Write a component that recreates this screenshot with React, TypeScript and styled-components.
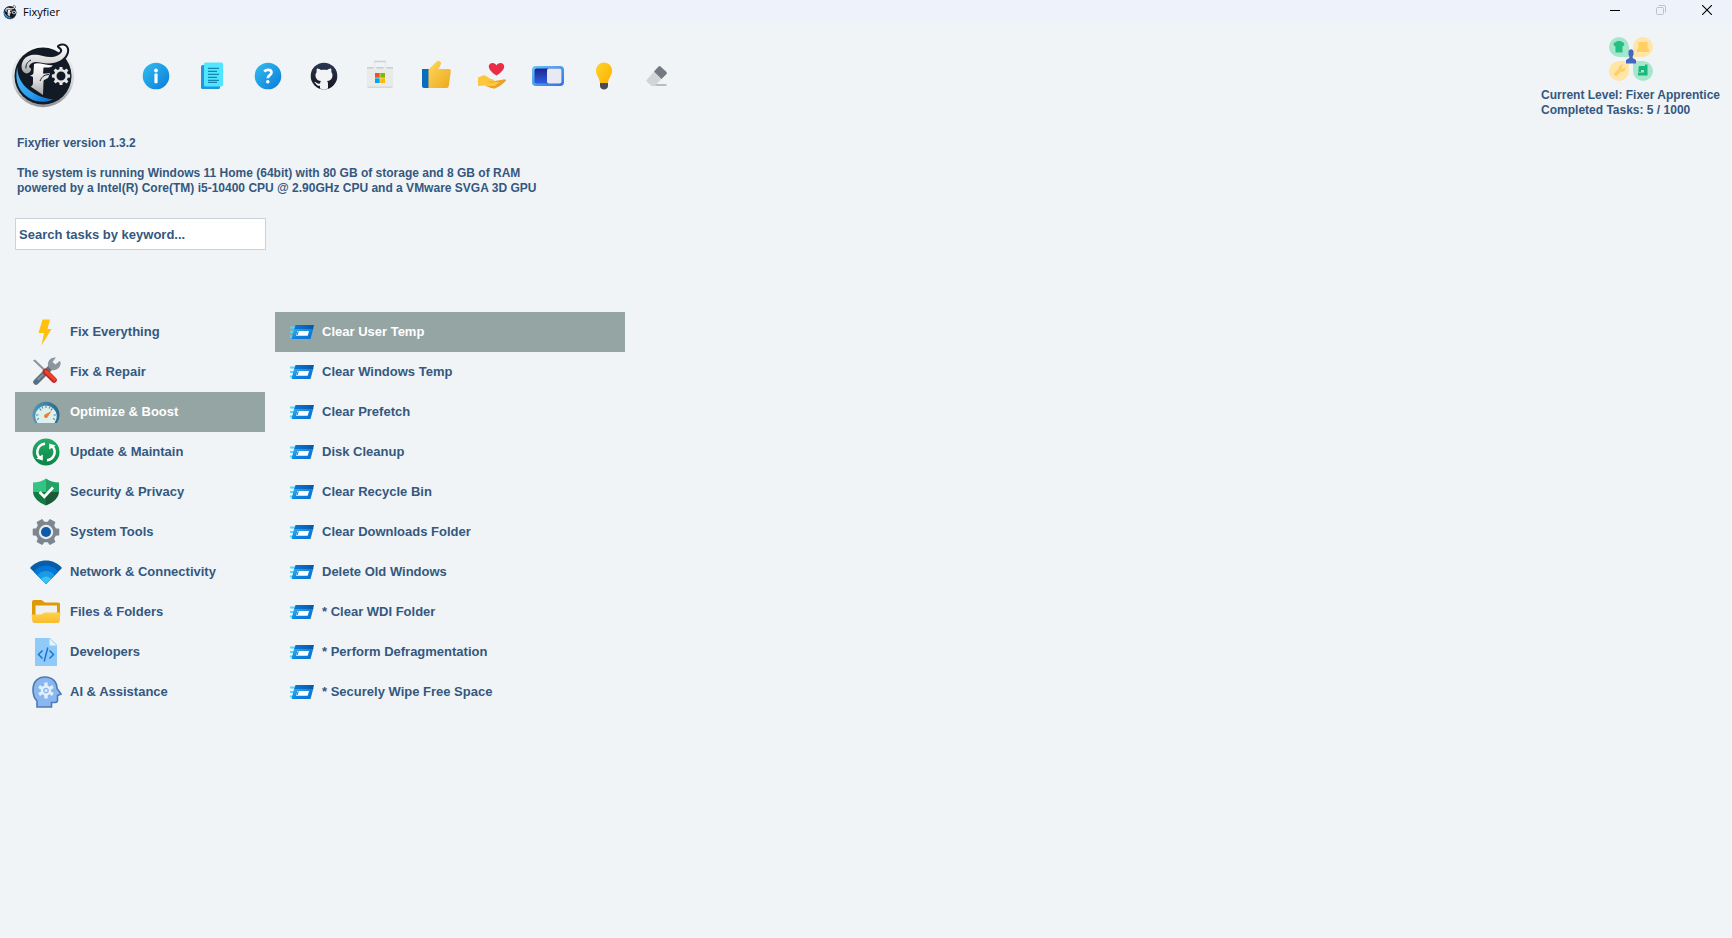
import React, { useState } from "react";
import styled, { createGlobalStyle, css } from "styled-components";

const GlobalStyle = createGlobalStyle`
  *, *::before, *::after { box-sizing: border-box; }
  body {
    margin: 0;
    background: #f0f4f7;
    color: #34587f;
    font-family: "Liberation Sans", Arial, sans-serif;
    font-size: 12px;
    font-weight: 700;
  }
  button, input { font: inherit; color: inherit; }
`;

const Page = styled.div`
  min-height: 100vh;
  background: #f0f4f7;
`;

const TitleBar = styled.header`
  display: flex;
  align-items: center;
  height: 23px;
  padding: 0 2px;
  background: #eef2fb;
`;

const WindowTitle = styled.h1`
  flex: 1;
  margin: 0 0 0 5px;
  color: #000;
  font-family: "Open Sans", "Noto Sans", sans-serif;
  font-size: 11px;
  font-weight: 400;
  line-height: 22px;
`;

const WindowButton = styled.button<{ $dim?: boolean }>`
  display: flex;
  justify-content: center;
  align-items: center;
  width: 46px;
  height: 20px;
  padding: 0;
  border: 0;
  background: none;
  align-self: flex-start;
  color: ${(p) => (p.$dim ? "#bfc2c8" : "#000")};
`;

const Header = styled.div`
  display: flex;
  align-items: flex-start;
  padding: 15px 12px 0 7px;
`;

const Toolbar = styled.nav`
  display: flex;
  gap: 24px;
  flex: 1;
  margin: 22px 0 0 61px;
`;

const ToolButton = styled.button`
  display: flex;
  width: 32px;
  height: 32px;
  padding: 0;
  border: 0;
  background: none;
  cursor: pointer;
`;

const Level = styled.section`
  display: flex;
  flex-direction: column;
  align-items: center;
  margin-top: -1px;
`;

const Lines = styled.p`
  margin: 0;
  font-size: 12px;
  line-height: 15px;
`;

const LevelLines = styled(Lines)`
  margin-top: 7px;
`;

const Info = styled.section`
  display: flex;
  flex-direction: column;
  gap: 15px;
  padding: 18px 17px 0;
`;

const SearchInput = styled.input`
  display: block;
  width: 251px;
  height: 32px;
  margin: 22px 0 62px 15px;
  padding: 0 3px;
  border: 1px solid #ccd2da;
  border-radius: 0;
  background: #fff;
  font-size: 13px;
  outline: none;
  &::placeholder { color: #34587f; opacity: 1; }
`;

const Columns = styled.main`
  display: flex;
  gap: 10px;
  padding: 0 15px 24px;
`;

const List = styled.ul<{ $width: number }>`
  width: ${(p) => p.$width}px;
  margin: 0;
  padding: 0;
  list-style: none;
`;

const rowSelected = css`
  background: #95a5a4;
  color: #fff;
`;

const RowButton = styled.button<{ $selected: boolean }>`
  display: flex;
  align-items: center;
  gap: 8px;
  width: 100%;
  height: 40px;
  padding: 0 15px;
  border: 0;
  background: none;
  font-size: 13px;
  line-height: 20px;
  text-align: left;
  white-space: pre;
  cursor: pointer;
  ${(p) => p.$selected && rowSelected}
`;

function gear(cx: number, cy: number, teeth: number, outer: number, inner: number) {
  const step = (Math.PI * 2) / teeth;
  const pts: string[] = [];
  for (let i = 0; i < teeth; i++) {
    const a = i * step - Math.PI / 2;
    const corners: [number, number][] = [
      [-0.3, inner],
      [-0.2, outer],
      [0.2, outer],
      [0.3, inner],
    ];
    corners.forEach(([t, r]) =>
      pts.push(`${(cx + r * Math.cos(a + t * step)).toFixed(2)} ${(cy + r * Math.sin(a + t * step)).toFixed(2)}`)
    );
  }
  return `M${pts.join("L")}Z`;
}

const Logo = ({ size, id }: { size: number; id: string }) => (
  <svg width={size} height={size} viewBox="0 0 72 72" aria-hidden="true">
    <defs>
      <linearGradient id={`${id}r`} x1="0" y1="0" x2="0" y2="1">
        <stop offset="0" stopColor="#fafafa" />
        <stop offset=".6" stopColor="#d4d6d8" />
        <stop offset="1" stopColor="#8f9397" />
      </linearGradient>
      <linearGradient id={`${id}b`} x1="0" y1="0" x2="1" y2="1">
        <stop offset="0" stopColor="#4fb9f8" />
        <stop offset=".6" stopColor="#2a9df0" />
        <stop offset="1" stopColor="#0b66c4" />
      </linearGradient>
      <linearGradient id={`${id}f`} x1="0" y1="0" x2="0" y2="1">
        <stop offset="0" stopColor="#fff" />
        <stop offset=".55" stopColor="#dcdcdc" />
        <stop offset="1" stopColor="#a3a5a8" />
      </linearGradient>
    </defs>
    <circle cx="36" cy="38" r="31.2" fill={`url(#${id}r)`} />
    <circle cx="36" cy="38" r="28.5" fill="#121a26" />
    <path d="M10.500 29C9.500 43 22 58 46 61.500C34 67 20 62 13.500 52C9 45 8.500 36 10.500 29Z" fill={`url(#${id}b)`} />
    <path
      d="M52 8.500C57 6 61 9 60 14C58.500 21 50 25.500 41 25.500C34 25.500 29 22.500 25 25C22 27 21 29 24 30.500C24.500 33.500 21 36.500 18 35C14 33 13.500 27 16.500 22C21 15.500 29 16 36 18C44 20.500 53 18.500 55 13.500C55.800 11 54 10 52 8.500Z"
      fill={`url(#${id}f)`}
      stroke="#121a26"
      strokeWidth="4"
      strokeLinejoin="round"
      paintOrder="stroke"
    />
    <path d="M19 30.500C18.500 27 20.500 23.500 24 22" fill="none" stroke="#121a26" strokeWidth="1" />
    <path
      d="M27 26C31 24 38 27 46 27.500C44 30 40 29.500 36.500 29.500L36 35.500C38 36 42 35 43 35.500L41.500 39C41 41 37.500 41 36.500 43L36 57L23.500 48.500C26 48 26 46 26 43V39L23 37.500C26 37 26.500 36 26.500 34Z"
      fill={`url(#${id}f)`}
    />
    <path d="M42 36.500C36 37 35 39 33 43" fill="none" stroke="#121a26" strokeWidth="1" />
    <path
      fillRule="evenodd"
      d={`${gear(54, 38, 8, 9.2, 7)}M49.500 38a4.500 4.500 0 1 0 9 0a4.500 4.500 0 1 0-9 0Z`}
      fill="#e6e6e6"
      stroke="#121a26"
      strokeWidth="2"
      paintOrder="stroke"
    />
  </svg>
);

const BlueDisc = ({ children, id }: { children: React.ReactNode; id: string }) => (
  <svg width="32" height="32" viewBox="0 0 32 32" aria-hidden="true">
    <defs>
      <linearGradient id={id} x1="0" y1="0" x2="1" y2="1">
        <stop offset="0" stopColor="#33bef0" />
        <stop offset="1" stopColor="#0a7bdb" />
      </linearGradient>
    </defs>
    <circle cx="16" cy="16" r="13.300" fill={`url(#${id})`} />
    {children}
  </svg>
);

const InfoIcon = () => (
  <BlueDisc id="discInfo">
    <circle cx="16" cy="10.500" r="1.900" fill="#fff" />
    <rect x="14.400" y="13.600" width="3.200" height="9.600" rx=".6" fill="#fff" />
  </BlueDisc>
);

const HelpIcon = () => (
  <BlueDisc id="discHelp">
    <path d="M12.300 11.600C13.500 10 15 9.800 16.200 9.800C18.300 9.800 19.500 10.900 19.500 12.500C19.500 15.200 15.800 15.200 15.800 18.200" fill="none" stroke="#fff" strokeWidth="2.700" />
    <circle cx="15.800" cy="21.800" r="1.800" fill="#fff" />
  </BlueDisc>
);

const DocsIcon = () => (
  <svg width="32" height="32" viewBox="0 0 32 32" aria-hidden="true">
    <rect x="5" y="5" width="19" height="24" rx="1.500" fill="#2196dc" />
    <rect x="8" y="2.500" width="19" height="24" rx="1.500" fill="#50e6ff" />
    <path d="M12 8.500h11M12 11.500h9M12 14.500h11M12 17.500h9M12 20.500h11M12 22.500h9" transform="translate(0 -.2)" stroke="#1587b5" strokeWidth="1.200" />
  </svg>
);

const GithubIcon = () => (
  <svg width="32" height="32" viewBox="0 0 32 32" aria-hidden="true">
    <defs>
      <linearGradient id="ghDisc" x1="0" y1="0" x2="0" y2="1">
        <stop offset="0" stopColor="#2b3854" />
        <stop offset="1" stopColor="#15151c" />
      </linearGradient>
    </defs>
    <circle cx="16" cy="16" r="13.300" fill="url(#ghDisc)" />
    <path
      d="M9 8.500C10.500 8.300 12 9.200 13 10C15 9.500 17 9.500 19 10C20 9.200 21.500 8.300 23 8.500C23.600 10 23.500 11.200 23.300 12C24.500 13.500 24.800 15 24.300 17C23.600 19.800 21.500 20.700 19 21C20 22 20 23 20 24.500V28.600C17.500 29.500 14.500 29.500 12 28.600V25.800C8.800 26.400 8.300 24 7 22.800C6.500 22.300 6 22 6.800 21.900C8.800 22 9 24.200 12.100 23.600C12.100 22.500 12.500 21.500 13 21C10.500 20.700 8.400 19.800 7.700 17C7.200 15 7.500 13.500 8.700 12C8.500 11.200 8.400 10 9 8.500Z"
      fill="#f2f3f5"
    />
  </svg>
);

const StoreIcon = () => (
  <svg width="32" height="32" viewBox="0 0 32 32" aria-hidden="true">
    <path d="M10.500 8V1.500H21.500V8" fill="none" stroke="#e6e7e8" strokeWidth="1.200" />
    <path d="M10 1.500H22" stroke="#cfd0d1" strokeWidth="1.500" />
    <path d="M3 7H29V26Q29 28 27 28H5Q3 28 3 26Z" fill="#e9eaea" />
    <path d="M3 26.500H29Q29 28 27 28H5Q3 28 3 26.500Z" fill="#d6d7d8" />
    <path d="M3 7.800H9.500M12.500 7.800H19.500M22.500 7.800H29" stroke="#cbcccd" strokeWidth="1.400" />
    <path d="M11 13H15.700V17.700H11Z" fill="#f25022" />
    <path d="M16.300 13H21V17.700H16.300Z" fill="#7fba00" />
    <path d="M11 18.300H15.700V23H11Z" fill="#00a4ef" />
    <path d="M16.300 18.300H21V23H16.300Z" fill="#ffb900" />
  </svg>
);

const LikeIcon = () => (
  <svg width="32" height="32" viewBox="0 0 32 32" aria-hidden="true">
    <defs>
      <linearGradient id="likeHand" x1="0" y1="0" x2="1" y2="1">
        <stop offset="0" stopColor="#ffd75e" />
        <stop offset="1" stopColor="#eda91c" />
      </linearGradient>
    </defs>
    <path d="M2 9H9V28H4Q2 28 2 26Z" fill="#0a6cbd" />
    <path d="M8.500 9.500L17 1.300C18.300-.3 21.300 1.200 21 3.600C20.800 5 19.500 7 18.500 9H29C30.500 9 31 10 30.800 11.300L28.800 26Q28.500 28 26.700 28H8.500Z" fill="url(#likeHand)" />
  </svg>
);

const DonateIcon = () => (
  <svg width="32" height="32" viewBox="0 0 32 32" aria-hidden="true">
    <path d="M20.500 15.600C16 12.500 12.800 9.500 12.800 6.400C12.800 2.500 18 1.500 20.500 5.200C23 1.500 28.200 2.500 28.200 6.400C28.200 9.500 25 12.500 20.500 15.600Z" fill="#e92c47" />
    <path d="M2 17.500L7 15.500C10 14.600 11.500 18 14.500 18.700C16.500 19.200 18.500 19.300 18.500 21L24.500 20.500C26 20 28.500 18.800 30 20.200C29.500 22 21 28 18.500 28.500C15 28.500 11.500 26 8 25.500L2 26Z" fill="#fcc73f" />
    <path d="M11 21.500C14 22.800 18.500 23.500 19.500 21L28 19.500C28.500 19.500 30 19.500 30 20.200C29.500 22 21 28 18.500 28.500C16 28.500 13 27 10 26L18.500 26L24 22Z" fill="#e9a227" />
  </svg>
);

const ToggleIcon = () => (
  <svg width="32" height="32" viewBox="0 0 32 32" aria-hidden="true">
    <defs>
      <linearGradient id="tgFrame" x1="0" y1="0" x2="1" y2="1">
        <stop offset="0" stopColor="#6bc4fb" />
        <stop offset="1" stopColor="#2f6fe4" />
      </linearGradient>
      <linearGradient id="tgFill" x1="0" y1="0" x2="0" y2="1">
        <stop offset="0" stopColor="#1a2690" />
        <stop offset="1" stopColor="#2f5fe0" />
      </linearGradient>
    </defs>
    <rect x="0" y="6" width="32" height="20" rx="4" fill="url(#tgFrame)" />
    <rect x="2.500" y="8.500" width="27" height="15" rx="2" fill="url(#tgFill)" />
    <rect x="15" y="8.500" width="14.500" height="15" rx="2" fill="#e7eaf5" />
  </svg>
);

const BulbIcon = () => (
  <svg width="32" height="32" viewBox="0 0 32 32" aria-hidden="true">
    <defs>
      <linearGradient id="bulb" x1="0" y1="0" x2="1" y2="1">
        <stop offset="0" stopColor="#ffd42a" />
        <stop offset="1" stopColor="#fbb000" />
      </linearGradient>
    </defs>
    <path d="M16 2.500C21 2.500 24 6.300 24 10.700C24 15.500 20.500 17.500 20 23H12C11.500 17.500 8 15.500 8 10.700C8 6.300 11 2.500 16 2.500Z" fill="url(#bulb)" />
    <path d="M12 23H20V26C20 28 18 29.500 16 29.500C14 29.500 12 28 12 26Z" fill="#484c52" />
  </svg>
);

const EraserIcon = () => (
  <svg width="32" height="32" viewBox="0 0 32 32" aria-hidden="true">
    <path d="M10 24H22.500V26H8Z" fill="#b9bdc1" />
    <path d="M3 19.500L10 11.500L17.500 18.500L11 26H7.500L2.500 21.500Q2 20.500 3 19.500Z" fill="#d2d5d8" />
    <path d="M10 11.500L14.500 6.500Q15.500 5.500 16.500 6.500L22.500 12Q23.500 13 22.500 14L17.500 19Z" fill="#727980" />
  </svg>
);

const LevelIcon = () => (
  <svg width="44" height="44" viewBox="0 0 44 44" aria-hidden="true">
    <path d="M10 0A10 10 0 0 1 20 10V20H10A10 10 0 0 1 10 0Z" fill="#a6e6cd" />
    <path d="M34 0A10 10 0 0 1 34 20H24V10A10 10 0 0 1 34 0Z" fill="#ffe5a6" />
    <path d="M10 24H20V34A10 10 0 1 1 10 24Z" fill="#ffe5a6" />
    <path d="M24 24H34A10 10 0 1 1 24 34Z" fill="#a6e6cd" />
    <path d="M6.500 5.200C7.500 3.700 12.500 3.700 13.500 5.200C16 5.500 16 8.500 13.500 9.500V15.500H6.500V9.500C4 8.500 4 5.500 6.500 5.200Z" fill="#26bf86" />
    <path d="M29.500 5H38.500V12H40V15H28V12H29.500Z" fill="#ffcf63" />
    <path d="M5.500 36L10 31.500C9.500 29 11.500 27 14.500 27.500L12.500 30L14 31.700L16.500 30C17 33.500 14.500 35.500 12 34.500L8 38.500C6.500 39.500 4.500 38 5.500 36Z" fill="#ffcf63" />
    <path d="M30 29H36V27.500H38.500V38.500H29V35.500H35V33H32V35H29.500V31Z" fill="#16b97a" />
    <path d="M19.500 15C19.500 11.300 24.500 11.300 24.500 15V17.500L23.700 19.500V21L27 23V26.500H17V23L20.300 21V19.500L19.500 17.500Z" fill="#4468bd" />
  </svg>
);

const BoltIcon = () => (
  <svg width="32" height="32" viewBox="0 0 32 32" aria-hidden="true">
    <path d="M12.500 3.500H20L17.500 13H21.500L11.500 29.500L14 17H8.500Z" fill="#ffc10a" />
  </svg>
);

const ToolsIcon = () => (
  <svg width="32" height="32" viewBox="0 0 32 32" aria-hidden="true">
    <path d="M3 4.500L5 3.500L15.500 13.500L14 15Z" fill="#8b959e" />
    <path d="M6 26L22 10" stroke="#626d78" strokeWidth="5.500" strokeLinecap="round" />
    <path d="M29.500 5L25.500 8.500L22.500 6L26 1.500C20 1 16.500 6 18.500 11L21.500 14C26.500 15.500 31.500 11 30.500 6Z" fill="#8c969e" />
    <path d="M7 24.500L13 18.500" stroke="#8390a0" strokeWidth="2" />
    <circle cx="7" cy="25" r="1.400" fill="#2c75c4" />
    <path d="M15.500 15.500L24 24" stroke="#c32320" strokeWidth="5.600" strokeLinecap="round" />
    <path d="M16 15.500L24.500 23.500" stroke="#ee432a" strokeWidth="3.200" strokeLinecap="round" />
  </svg>
);

const GaugeIcon = () => (
  <svg width="32" height="32" viewBox="0 0 32 32" aria-hidden="true">
    <defs>
      <linearGradient id="gaugeRing" x1="0" y1="0" x2="1" y2="0">
        <stop offset="0" stopColor="#5499b8" />
        <stop offset="1" stopColor="#28698f" />
      </linearGradient>
    </defs>
    <path d="M5 27A13.500 13.500 0 1 1 27 27Z" fill="url(#gaugeRing)" />
    <path d="M7.500 27A10.800 10.800 0 1 1 24.500 27Z" fill="#dcf1ee" />
    <path d="M16 9.500V12M9.500 12.500L11.300 14.300M22.500 12.500L20.700 14.300M6 19H8.500M26 19H23.500M7 23.500L9 22.500M25 23.500L23 22.500M12 10.500L12.900 12.500M20 10.500L19.100 12.500" stroke="#528ba2" strokeWidth="1.100" />
    <path d="M21.500 15L18 20.500A2 2 0 1 1 14.800 18.500Z" fill="#f47a36" />
  </svg>
);

const UpdateIcon = () => (
  <svg width="32" height="32" viewBox="0 0 32 32" aria-hidden="true">
    <defs>
      <linearGradient id="updDisc" x1="0" y1="0" x2="0" y2="1">
        <stop offset="0" stopColor="#23ad67" />
        <stop offset="1" stopColor="#0c8445" />
      </linearGradient>
    </defs>
    <circle cx="16" cy="16" r="13.500" fill="url(#updDisc)" />
    <path d="M15 7.800A8.200 8.200 0 0 0 9.500 21.500M17 24.200A8.200 8.200 0 0 0 22.500 10.500" fill="none" stroke="#fff" strokeWidth="2.500" />
    <path d="M6.200 22.500L12.800 18.500V24.500ZM25.800 9.500L19.200 7.500V13.500Z" fill="#fff" />
  </svg>
);

const ShieldIcon = () => (
  <svg width="32" height="32" viewBox="0 0 32 32" aria-hidden="true">
    <path d="M16 2.500V16H3V6.500C8 6.500 12.500 5 16 2.500Z" fill="#33c481" />
    <path d="M16 2.500V16H29V6.500C24 6.500 19.500 5 16 2.500Z" fill="#21a366" />
    <path d="M3 16H16V29.500C8.500 26.500 3.500 22 3 16Z" fill="#107c41" />
    <path d="M29 16H16V29.500C23.500 26.500 28.500 22 29 16Z" fill="#185c37" />
    <path d="M9.500 16L14.300 20.700L23 11.500" fill="none" stroke="#fff" strokeWidth="2.700" />
  </svg>
);

const GearIcon = () => (
  <svg width="32" height="32" viewBox="0 0 32 32" aria-hidden="true">
    <g transform="rotate(30 16 16)">
      <path d={gear(16, 16, 6, 12.8, 9.8)} fill="#7d868e" stroke="#7d868e" strokeWidth="1.500" strokeLinejoin="round" />
    </g>
    <circle cx="16" cy="16" r="7.200" fill="#e9ecef" />
    <circle cx="16" cy="16" r="5" fill="#0d5aa8" />
  </svg>
);

const WifiIcon = () => (
  <svg width="32" height="32" viewBox="0 0 32 32" aria-hidden="true">
    <path d="M0 12C8 2 24 2 32 12L16 28Z" fill="#0a5ca8" />
    <path d="M3.700 15.700C10.500 7.500 21.500 7.500 28.300 15.700L16 28Z" fill="#0377d6" />
    <path d="M7.300 19.300C12 13.500 20 13.500 24.700 19.300L16 28Z" fill="#1b9ae6" />
    <path d="M11 23C13.500 19.500 18.500 19.500 21 23L16 28Z" fill="#38c4f3" />
  </svg>
);

const FolderIcon = () => (
  <svg width="32" height="32" viewBox="0 0 32 32" aria-hidden="true">
    <defs>
      <linearGradient id="fldFront" x1="0" y1="0" x2="0" y2="1">
        <stop offset="0" stopColor="#ffd24a" />
        <stop offset="1" stopColor="#f8bb2e" />
      </linearGradient>
    </defs>
    <path d="M2 6Q2 4 4 4H11.500L15 6.500H28Q30 6.500 30 8V22H2Z" fill="#e09a06" />
    <path d="M5.500 9.500H27V22H5.500Z" fill="#f1f1f1" />
    <path d="M1.500 18.500H11L14.500 16.500H30.500L29.700 25Q29.500 27 27.500 27H4.500Q2.500 27 2.300 25Z" fill="url(#fldFront)" />
  </svg>
);

const CodeFileIcon = () => (
  <svg width="32" height="32" viewBox="0 0 32 32" aria-hidden="true">
    <path d="M5 2H20L27 9V30H5Z" fill="#90caf9" />
    <path d="M19.500 2.500L26.500 9.500H19.500Z" fill="#e1f5fe" />
    <path d="M12.500 14.500L8.500 18.500L12.500 22.500M19.500 14.500L23.500 18.500L19.500 22.500M17.800 11.500L14.200 25.500" fill="none" stroke="#1976d2" strokeWidth="1.500" />
  </svg>
);

const HeadIcon = () => (
  <svg width="32" height="32" viewBox="0 0 32 32" aria-hidden="true">
    <path d="M7 31V25C4 22 3 19 3 14C3 5 8.500 1 15 1C22.500 1 27 6 27 12.500L31 18L27.500 19.500V24Q27.500 26.500 25 26.500H21.500V31Z" fill="#8bb7f0" stroke="#4e7ab5" strokeWidth="1.600" />
    <path fillRule="evenodd" d={`${gear(16, 14.5, 6, 8.2, 5.2)}M13.200 14.500a2.800 2.800 0 1 0 5.600 0a2.800 2.800 0 1 0-5.600 0Z`} fill="#e3f0fc" />
    <circle cx="16" cy="14.500" r="1.500" fill="#dcebfb" />
  </svg>
);

const TaskIcon = () => (
  <svg width="24" height="16" viewBox="0 0 24 16" aria-hidden="true">
    <defs>
      <linearGradient id="taskBody" x1="0" y1="0" x2="1" y2="1">
        <stop offset="0" stopColor="#33b6f0" />
        <stop offset=".6" stopColor="#0b7fdc" />
        <stop offset="1" stopColor="#0a72d0" />
      </linearGradient>
      <linearGradient id="taskTop" x1="0" y1="0" x2="1" y2="0">
        <stop offset="0" stopColor="#0a7ad4" />
        <stop offset="1" stopColor="#0a56a6" />
      </linearGradient>
    </defs>
    <path d="M0 3.500H6M0 8H5M0 12.500H4" stroke="#5bd3fa" strokeWidth="1.800" />
    <path d="M4.300 4H23.500L20.500 15H2Q1.500 15 1.800 14Z" fill="url(#taskBody)" />
    <path d="M5.500 1H24L23 5H4.300Z" fill="url(#taskTop)" />
    <path d="M7.500 7H19L17.700 11.700H6Z" fill="#fff" />
    <path d="M8.300 7.500L7 11" stroke="#0b6fc4" strokeWidth="1" />
  </svg>
);

const tools = [
  { label: "About", Icon: InfoIcon },
  { label: "Documentation", Icon: DocsIcon },
  { label: "Help", Icon: HelpIcon },
  { label: "GitHub", Icon: GithubIcon },
  { label: "Microsoft Store", Icon: StoreIcon },
  { label: "Like", Icon: LikeIcon },
  { label: "Donate", Icon: DonateIcon },
  { label: "Toggle theme", Icon: ToggleIcon },
  { label: "Ideas", Icon: BulbIcon },
  { label: "Clear output", Icon: EraserIcon },
];

const categories = [
  { label: "Fix Everything", Icon: BoltIcon },
  { label: "Fix & Repair", Icon: ToolsIcon },
  { label: "Optimize & Boost", Icon: GaugeIcon },
  { label: "Update & Maintain", Icon: UpdateIcon },
  { label: "Security & Privacy", Icon: ShieldIcon },
  { label: "System Tools", Icon: GearIcon },
  { label: "Network & Connectivity", Icon: WifiIcon },
  { label: "Files & Folders", Icon: FolderIcon },
  { label: "Developers", Icon: CodeFileIcon },
  { label: "AI & Assistance", Icon: HeadIcon },
];

const tasks = [
  "Clear User Temp",
  "Clear Windows Temp",
  "Clear Prefetch",
  "Disk Cleanup",
  "Clear Recycle Bin",
  "Clear Downloads Folder",
  "Delete Old Windows",
  "* Clear WDI Folder",
  "* Perform Defragmentation",
  "* Securely Wipe Free Space",
];

export default function App() {
  const [category, setCategory] = useState("Optimize & Boost");
  const [task, setTask] = useState("Clear User Temp");
  const [query, setQuery] = useState("");

  return (
    <Page>
      <GlobalStyle />
      <TitleBar>
        <Logo size={16} id="small" />
        <WindowTitle>Fixyfier</WindowTitle>
        <WindowButton aria-label="Minimize">
          <svg width="10" height="10" viewBox="0 0 10 10">
            <path d="M0 5.500H10" stroke="currentColor" />
          </svg>
        </WindowButton>
        <WindowButton aria-label="Restore" $dim>
          <svg width="10" height="10" viewBox="0 0 10 10" fill="none" stroke="currentColor">
            <rect x=".5" y="2.500" width="7" height="7" rx="1" />
            <path d="M2.500 .5H8Q9.500 .5 9.500 2V7.500" />
          </svg>
        </WindowButton>
        <WindowButton aria-label="Close">
          <svg width="10" height="10" viewBox="0 0 10 10">
            <path d="M0 0L10 10M10 0L0 10" stroke="currentColor" strokeWidth="1.100" />
          </svg>
        </WindowButton>
      </TitleBar>

      <Header>
        <Logo size={72} id="main" />
        <Toolbar aria-label="Quick actions">
          {tools.map(({ label, Icon }) => (
            <ToolButton key={label} aria-label={label}>
              <Icon />
            </ToolButton>
          ))}
        </Toolbar>
        <Level>
          <LevelIcon />
          <LevelLines>
            Current Level: Fixer Apprentice
            <br />
            Completed Tasks: 5 / 1000
          </LevelLines>
        </Level>
      </Header>

      <Info>
        <Lines>Fixyfier version 1.3.2</Lines>
        <Lines>
          The system is running Windows 11 Home (64bit) with 80 GB of storage and 8 GB of RAM
          <br />
          powered by a Intel(R) Core(TM) i5-10400 CPU @ 2.90GHz CPU and a VMware SVGA 3D GPU
        </Lines>
      </Info>

      <SearchInput
        aria-label="Search tasks"
        placeholder="Search tasks by keyword..."
        value={query}
        onChange={(e) => setQuery(e.target.value)}
      />

      <Columns>
        <List $width={250}>
          {categories.map(({ label, Icon }) => (
            <li key={label}>
              <RowButton $selected={label === category} onClick={() => setCategory(label)}>
                <Icon />
                {label}
              </RowButton>
            </li>
          ))}
        </List>
        <List $width={350}>
          {tasks.map((label) => (
            <li key={label}>
              <RowButton $selected={label === task} onClick={() => setTask(label)}>
                <TaskIcon />
                {label}
              </RowButton>
            </li>
          ))}
        </List>
      </Columns>
    </Page>
  );
}
